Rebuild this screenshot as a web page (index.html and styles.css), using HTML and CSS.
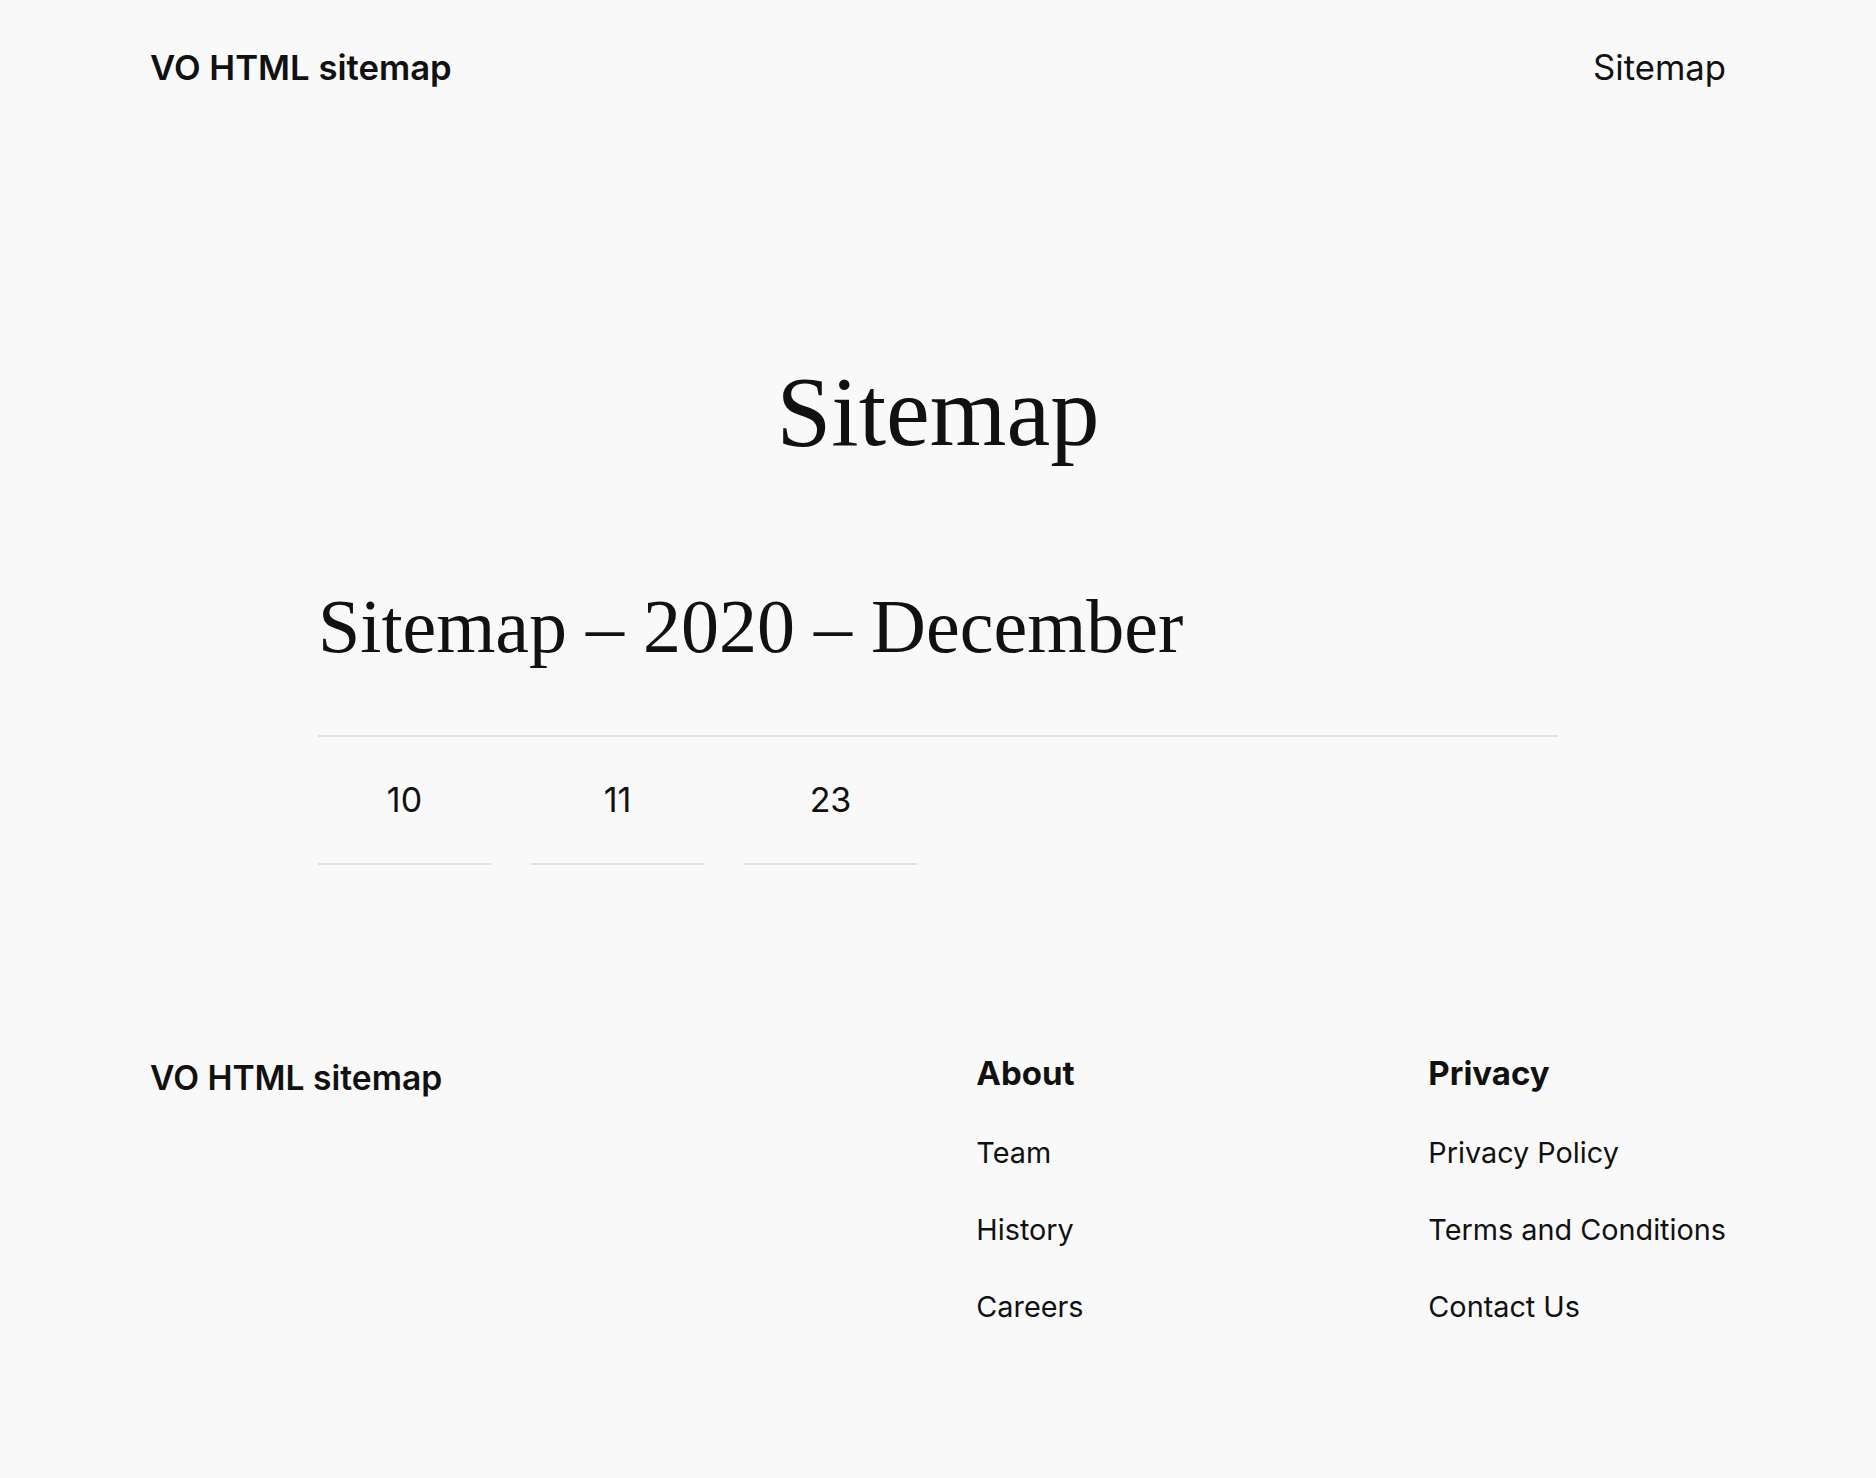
FILE: index.html
```html
<!DOCTYPE html>
<html lang="en">
<head>
<meta charset="utf-8">
<title>Sitemap – VO HTML sitemap</title>
<link rel="stylesheet" href="styles.css">
</head>
<body>
<header class="site-header">
  <a class="site-title" href="#">VO HTML sitemap</a>
  <nav class="site-nav"><a href="#">Sitemap</a></nav>
</header>
<main class="main">
  <h1 class="page-title">Sitemap</h1>
  <section class="archive">
    <h2 class="archive-title">Sitemap – 2020 – December</h2>
    <ul class="days">
      <li class="day"><a href="#">10</a></li>
      <li class="day"><a href="#">11</a></li>
      <li class="day"><a href="#">23</a></li>
    </ul>
  </section>
</main>
<footer class="site-footer">
  <div class="footer-brand">VO HTML sitemap</div>
  <div class="footer-nav">
    <div class="footer-col">
      <h3 class="footer-heading">About</h3>
      <ul class="footer-links">
        <li><a href="#">Team</a></li>
        <li><a href="#">History</a></li>
        <li><a href="#">Careers</a></li>
      </ul>
    </div>
    <div class="footer-col">
      <h3 class="footer-heading">Privacy</h3>
      <ul class="footer-links">
        <li><a href="#">Privacy Policy</a></li>
        <li><a href="#">Terms and Conditions</a></li>
        <li><a href="#">Contact Us</a></li>
      </ul>
    </div>
  </div>
</footer>
</body>
</html>
```
FILE: styles.css
```css
html, body {
  margin: 0;
  padding: 0;
}
body {
  background: #f9f9f9;
  color: #111111;
  font-family: Inter, "Noto Sans", sans-serif;
}
a {
  color: inherit;
  text-decoration: none;
}
ul {
  list-style: none;
  margin: 0;
  padding: 0;
}
h1, h2, h3 {
  margin: 0;
  font-weight: normal;
}

.site-header {
  display: flex;
  justify-content: space-between;
  align-items: center;
  padding: 46px 150px 0;
}
.site-title {
  font-size: 34.7px;
  font-weight: 600;
  line-height: 42px;
}
.site-nav {
  font-size: 34.7px;
  line-height: 42px;
}

.main {
  display: flex;
  flex-direction: column;
  align-items: center;
  padding-top: 264px;
}
.page-title {
  font-family: "Liberation Serif", serif;
  font-size: 98.5px;
  line-height: 119px;
  text-align: center;
}
.archive {
  width: 1240px;
  padding-top: 110px;
}
.archive-title {
  font-family: "Liberation Serif", serif;
  font-size: 76px;
  line-height: 91px;
  padding-bottom: 63px;
  border-bottom: 2px solid #e2e2e2;
}
.days {
  display: flex;
  gap: 40px;
}
.day {
  width: 173px;
  text-align: center;
  font-size: 34px;
  line-height: 40px;
  padding: 43px 0;
  border-bottom: 2px solid #e2e2e2;
}

.site-footer {
  display: flex;
  align-items: flex-start;
  padding: 188px 150px 0;
}
.footer-brand {
  flex: 1;
  font-size: 33.6px;
  font-weight: 600;
  line-height: 40px;
  padding-top: 5px;
}
.footer-nav {
  display: grid;
  grid-template-columns: 452px auto;
}
.footer-heading {
  font-size: 33px;
  font-weight: 700;
  line-height: 40px;
}
.footer-links {
  display: flex;
  flex-direction: column;
  gap: 42px;
  padding-top: 42px;
  font-size: 28.8px;
  line-height: 35px;
}
```
